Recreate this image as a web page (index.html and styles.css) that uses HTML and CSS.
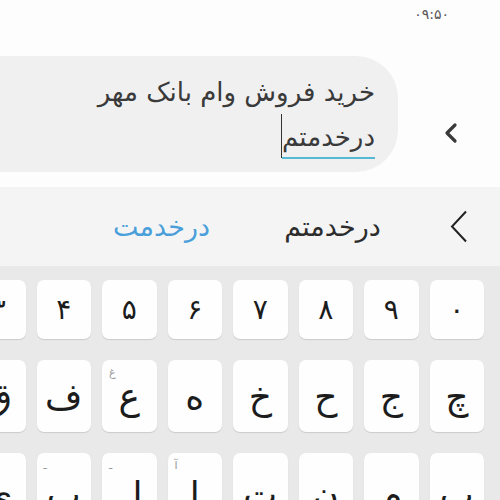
FILE: index.html
```html
<!DOCTYPE html>
<html lang="fa">
<head>
<meta charset="utf-8">
<link rel="stylesheet" href="styles.css">
</head>
<body>
<div class="screen">
  <div class="status"><span class="time">۰۹:۵۰</span></div>
  <div class="chat">
    <div class="bubble">
      <div class="line">خرید فروش وام بانک مهر</div>
      <div class="line"><span class="composing">درخدمتم</span><span class="cursor"></span></div>
    </div>
    <div class="back">
      <svg width="14" height="22" viewBox="0 0 14 22"><path d="M11 3 L3 11 L11 19" fill="none" stroke="#3a3a3a" stroke-width="3.2" stroke-linecap="round" stroke-linejoin="round"/></svg>
    </div>
  </div>
  <div class="suggest">
    <div class="sug-chev">
      <svg width="18" height="33" viewBox="0 0 18 33"><path d="M16 1.5 L2 16.5 L16 31.5" fill="none" stroke="#222" stroke-width="2"/></svg>
    </div>
    <div class="sug">درخدمتم</div>
    <div class="sug sug-alt">درخدمت</div>
  </div>
  <div class="keyboard">
    <div class="row row-num">
      <div class="key">۰</div>
      <div class="key">۹</div>
      <div class="key">۸</div>
      <div class="key">۷</div>
      <div class="key">۶</div>
      <div class="key">۵</div>
      <div class="key">۴</div>
      <div class="key">۳</div>
    </div>
    <div class="row row-letter">
      <div class="key">چ</div>
      <div class="key">ج</div>
      <div class="key">ح</div>
      <div class="key">خ</div>
      <div class="key">ه</div>
      <div class="key"><span class="hint">غ</span>ع</div>
      <div class="key">ف</div>
      <div class="key">ق</div>
    </div>
    <div class="row row-letter row-last">
      <div class="key">پ</div>
      <div class="key">م</div>
      <div class="key">ن</div>
      <div class="key">ت</div>
      <div class="key"><span class="hint">آ</span>ا</div>
      <div class="key"><span class="hint">ـ</span>ل</div>
      <div class="key"><span class="hint">ـ</span>ب</div>
      <div class="key">ی</div>
    </div>
  </div>
</div>
</body>
</html>
```
FILE: styles.css
```css
html, body {
  margin: 0;
  padding: 0;
}
body {
  width: 500px;
  height: 500px;
  overflow: hidden;
  background: #fdfdfd;
  font-family: "DejaVu Sans", "Noto Sans", sans-serif;
}
.screen {
  width: 500px;
  height: 500px;
  display: flex;
  flex-direction: column;
  overflow: hidden;
}
.screen > * {
  flex-shrink: 0;
}
.status {
  height: 40px;
  display: flex;
  justify-content: flex-end;
  align-items: flex-start;
  padding-right: 51px;
}
.time {
  direction: ltr;
  font-size: 14px;
  color: #555;
  margin-top: 6px;
  letter-spacing: 0.5px;
}
.chat {
  margin-top: 16px;
  display: flex;
  align-items: flex-start;
}
.bubble {
  width: 398px;
  height: 116px;
  box-sizing: border-box;
  padding: 14px 23px 0 0;
  background: #f0f0f1;
  border-radius: 0 42px 42px 0;
  direction: rtl;
  color: #3a3a3a;
  font-size: 26px;
}
.line {
  height: 44px;
  line-height: 44px;
  white-space: nowrap;
}
.composing {
  display: inline-block;
  line-height: 40px;
  border-bottom: 2.5px solid #55b9d6;
}
.cursor {
  display: inline-block;
  width: 1.5px;
  height: 44px;
  background: #333;
  vertical-align: -12px;
}
.back {
  margin-left: 46px;
  margin-top: 66px;
  display: flex;
}
.suggest {
  margin-top: 15px;
  height: 79px;
  background: #f4f4f4;
  display: flex;
  direction: rtl;
  align-items: center;
}
.sug-chev {
  width: 82px;
  display: flex;
  justify-content: center;
  align-items: center;
}
.sug {
  width: 171px;
  text-align: center;
  font-size: 27px;
  color: #2c2c2c;
}
.sug-alt {
  color: #4a9fda;
}
.keyboard {
  flex: 1 0 auto;
  background: #e9e9e9;
  padding-top: 14px;
  display: flex;
  flex-direction: column;
  gap: 21px;
}
.row {
  direction: rtl;
  display: flex;
  gap: 11px;
  padding-right: 16px;
}
.key {
  position: relative;
  flex: 0 0 54.5px;
  background: #fefefe;
  border-radius: 7px;
  box-shadow: 0 1px 1px rgba(0, 0, 0, 0.13);
  display: flex;
  justify-content: center;
  align-items: center;
  color: #1c1c1c;
}
.row-num .key {
  height: 59px;
  font-size: 28px;
}
.row-letter .key {
  height: 72px;
  font-size: 36px;
}
.row-last .key {
  box-sizing: border-box;
  padding-top: 10px;
}
.hint {
  position: absolute;
  top: 6px;
  left: 7px;
  font-size: 11px;
  color: #9a9a9a;
}
```
